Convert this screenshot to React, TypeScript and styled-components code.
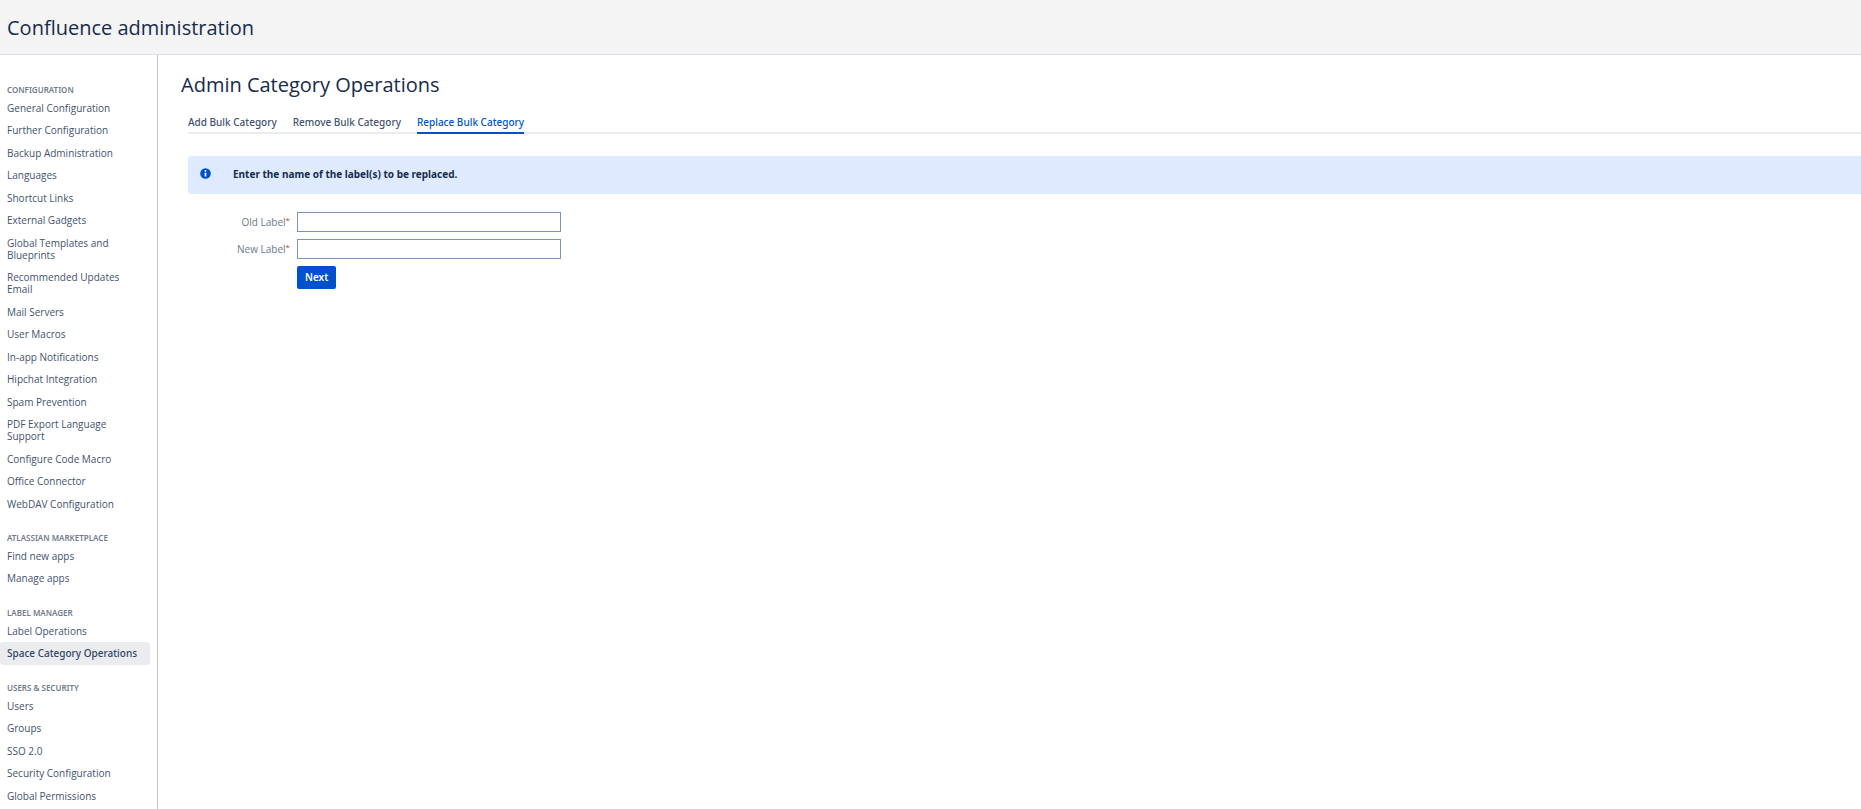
import React, { useState } from 'react';
import styled, { createGlobalStyle } from 'styled-components';

const GlobalStyle = createGlobalStyle`
  *, *::before, *::after { box-sizing: border-box; }
  html, body { margin: 0; height: 100%; }
  #root { height: 100%; }
  body {
    overflow: hidden;
    background: #fff;
    color: #172b4d;
    font-family: "Noto Sans", "Open Sans", sans-serif;
    font-size: 10px;
    line-height: 12px;
  }
`;

const Page = styled.div`
  display: flex;
  flex-direction: column;
  height: 100vh;
`;

const Header = styled.header`
  display: flex;
  align-items: center;
  flex: none;
  height: 55px;
  padding: 2px 7px 0;
  background: #f4f4f4;
  border-bottom: 1px solid #dcdde6;
`;

const Title = styled.h1`
  margin: 0;
  font: 500 20px/24px "Open Sans", "Noto Sans", sans-serif;
`;

const PageTitle = styled(Title).attrs({ as: 'h2' })``;

const Body = styled.div`
  display: flex;
  flex: 1;
  min-height: 0;
`;

const Sidebar = styled.nav`
  flex: none;
  width: 158px;
  padding: 28px 7px 0 0;
  overflow: hidden;
  border-right: 1px solid #c6c6c6;
`;

const Section = styled.section`
  margin-bottom: 16px;
`;

const SectionTitle = styled.h3`
  margin: 0;
  padding-left: 7px;
  color: #6f7a8c;
  font-size: 8px;
  font-weight: 600;
  line-height: 14px;
  text-transform: uppercase;
`;

const NavList = styled.ul`
  margin: 0;
  padding: 0;
  list-style: none;
`;

const NavLink = styled.a<{ $active?: boolean }>`
  display: block;
  padding: 5px 24px 5px 7px;
  border-radius: 3px;
  color: #42526e;
  font-family: "Open Sans", "Noto Sans", sans-serif;
  text-decoration: none;

  ${(p) =>
    p.$active &&
    `
    padding-right: 7px;
    background: #ebecf0;
    color: #344563;
    font-family: "Noto Sans", "Open Sans", sans-serif;
    font-weight: 500;
  `}

  li:nth-child(even) > & {
    padding-bottom: 6px;
  }
`;

const Main = styled.main`
  flex: 1;
  min-width: 0;
  padding: 18px 0 0 23px;
`;

const Content = styled.div`
  padding-left: 7px;
`;

const Tabs = styled.nav`
  display: flex;
  gap: 16px;
  margin-top: 19px;
  border-bottom: 2px solid #ebecf0;
`;

const Tab = styled.a<{ $active?: boolean }>`
  margin-bottom: -2px;
  padding-bottom: 4px;
  border-bottom: 2px solid ${(p) => (p.$active ? '#0052cc' : 'transparent')};
  color: ${(p) => (p.$active ? '#0052cc' : '#42526e')};
  font-weight: 500;
  text-decoration: none;
`;

const Message = styled.div`
  display: flex;
  align-items: flex-start;
  gap: 22px;
  min-height: 38px;
  margin: 22px 0 18px;
  padding: 12px;
  background: #deebff;
  border-radius: 3px 0 0 3px;
`;

const MessageText = styled.p`
  margin: 0;
  font-weight: 700;
`;

const InfoIcon = styled.svg`
  flex: none;
  width: 11px;
  height: 11px;
`;

const Form = styled.form`
  display: grid;
  grid-template-columns: 102px 264px;
  column-gap: 7px;
  row-gap: 7px;
`;

const Label = styled.label`
  display: flex;
  align-items: center;
  justify-content: flex-end;
  color: #6b778c;
  font-family: "Open Sans", "Noto Sans", sans-serif;
`;

const Required = styled.span`
  padding-bottom: 5px;
  color: #de350b;
  font-size: 8px;
  line-height: 8px;
`;

const TextInput = styled.input`
  height: 20px;
  padding: 0 4px;
  border: 1px solid #7a93b8;
  border-radius: 0;
  background: #fff;
  font: inherit;
`;

const NextButton = styled.button`
  grid-column: 2;
  justify-self: start;
  height: 23px;
  padding: 0 8px 1px;
  border: 0;
  border-radius: 2px;
  background: #0052cc;
  color: #fff;
  font: 600 10px/12px "Noto Sans", "Open Sans", sans-serif;
`;

const sections = [
  {
    title: 'Configuration',
    items: [
      'General Configuration',
      'Further Configuration',
      'Backup Administration',
      'Languages',
      'Shortcut Links',
      'External Gadgets',
      'Global Templates and Blueprints',
      'Recommended Updates Email',
      'Mail Servers',
      'User Macros',
      'In-app Notifications',
      'Hipchat Integration',
      'Spam Prevention',
      'PDF Export Language Support',
      'Configure Code Macro',
      'Office Connector',
      'WebDAV Configuration',
    ],
  },
  { title: 'Atlassian Marketplace', items: ['Find new apps', 'Manage apps'] },
  { title: 'Label Manager', items: ['Label Operations', 'Space Category Operations'] },
  {
    title: 'Users & Security',
    items: ['Users', 'Groups', 'SSO 2.0', 'Security Configuration', 'Global Permissions'],
  },
];

const tabs = ['Add Bulk Category', 'Remove Bulk Category', 'Replace Bulk Category'];

export default function App() {
  const [oldLabel, setOldLabel] = useState('');
  const [newLabel, setNewLabel] = useState('');

  return (
    <Page>
      <GlobalStyle />
      <Header>
        <Title>Confluence administration</Title>
      </Header>
      <Body>
        <Sidebar>
          {sections.map((section) => (
            <Section key={section.title}>
              <SectionTitle>{section.title}</SectionTitle>
              <NavList>
                {section.items.map((item) => (
                  <li key={item}>
                    <NavLink href="#" $active={item === 'Space Category Operations'}>
                      {item}
                    </NavLink>
                  </li>
                ))}
              </NavList>
            </Section>
          ))}
        </Sidebar>
        <Main>
          <PageTitle>Admin Category Operations</PageTitle>
          <Content>
            <Tabs>
              {tabs.map((tab) => (
                <Tab key={tab} href="#" $active={tab === 'Replace Bulk Category'}>
                  {tab}
                </Tab>
              ))}
            </Tabs>
            <Message>
              <InfoIcon viewBox="0 0 11 11" aria-hidden="true">
                <circle cx="5.5" cy="5.5" r="5.3" fill="#0052cc" />
                <circle cx="5.5" cy="3" r="0.9" fill="#fff" />
                <rect x="4.7" y="4.7" width="1.6" height="3.8" rx="0.6" fill="#fff" />
              </InfoIcon>
              <MessageText>Enter the name of the label(s) to be replaced.</MessageText>
            </Message>
            <Form onSubmit={(e) => e.preventDefault()}>
              <Label htmlFor="old-label">
                Old Label<Required>*</Required>
              </Label>
              <TextInput
                id="old-label"
                value={oldLabel}
                onChange={(e) => setOldLabel(e.target.value)}
              />
              <Label htmlFor="new-label">
                New Label<Required>*</Required>
              </Label>
              <TextInput
                id="new-label"
                value={newLabel}
                onChange={(e) => setNewLabel(e.target.value)}
              />
              <NextButton type="submit">Next</NextButton>
            </Form>
          </Content>
        </Main>
      </Body>
    </Page>
  );
}
